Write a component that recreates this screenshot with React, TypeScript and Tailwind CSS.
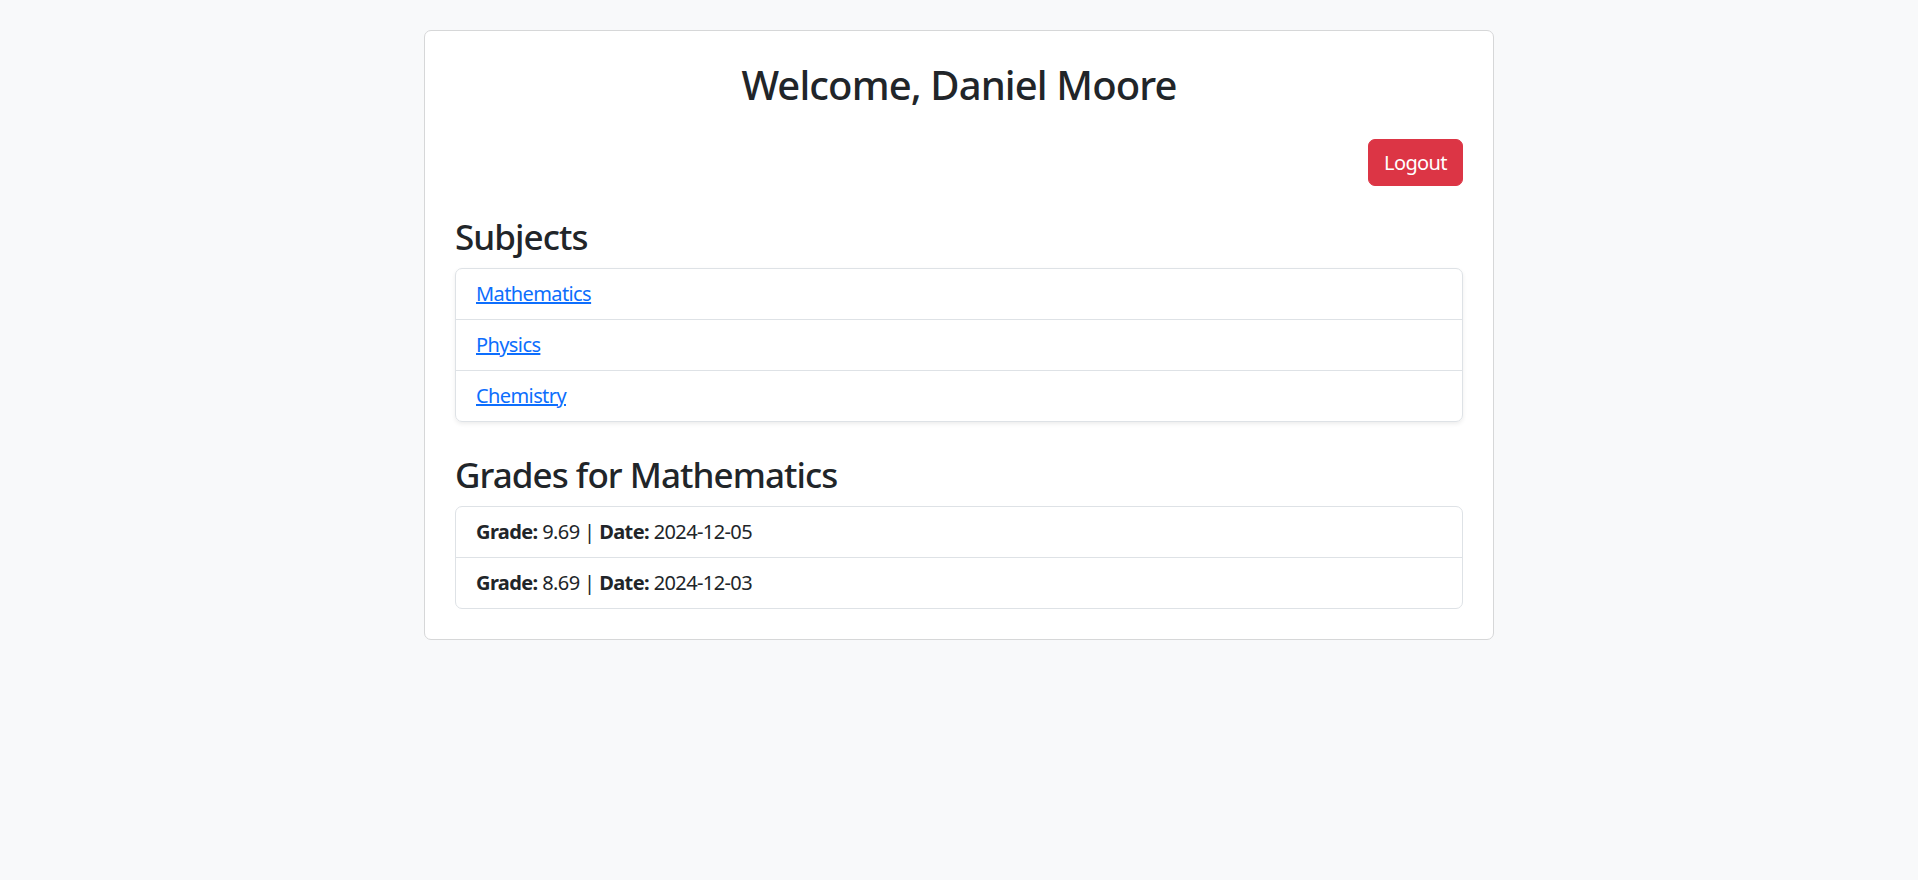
const subjects = ['Mathematics', 'Physics', 'Chemistry']

const grades = [
  { grade: '9.69', date: '2024-12-05' },
  { grade: '8.69', date: '2024-12-03' },
]

const App = () => (
  <div
    className="min-h-[880px] bg-[#f8f9fa] pt-[30px] text-[20px] leading-[30px] tracking-[-0.03em] text-[#212529]"
    style={{ fontFamily: '"Noto Sans", "Open Sans", sans-serif' }}
  >
    <div className="mx-auto w-[1070px] rounded-[7px] border border-[#d6d7d8] bg-white p-[30px]">
      <h2 className="mb-[30px] text-center text-[40px] font-medium leading-[48px] tracking-[-0.022em]">
        Welcome, Daniel Moore
      </h2>

      <div className="mb-[30px] flex justify-end">
        <button className="h-[47px] rounded-[7px] border border-[#dc3545] bg-[#dc3545] px-[15px] text-[20px] text-white">
          Logout
        </button>
      </div>

      <h3 className="mb-[10px] text-[35px] font-medium leading-[42px] tracking-[-0.027em]">
        Subjects
      </h3>
      <ul className="mb-[32px] overflow-hidden rounded-[7px] border border-[#dee2e6] shadow-[0_2px_4px_rgba(0,0,0,0.075)]">
        {subjects.map((s) => (
          <li
            className="border-b border-[#dee2e6] px-[20px] py-[10px] last:border-b-0"
            key={s}
          >
            <a className="text-[#0d6efd] underline" href="#">
              {s}
            </a>
          </li>
        ))}
      </ul>

      <h3 className="mb-[10px] text-[35px] font-medium leading-[42px] tracking-[-0.027em]">
        Grades for Mathematics
      </h3>
      <ul className="overflow-hidden rounded-[7px] border border-[#dee2e6]">
        {grades.map((g) => (
          <li
            className="border-b border-[#dee2e6] px-[20px] py-[10px] last:border-b-0"
            key={g.date}
          >
            <strong className="font-bold">Grade:</strong> {g.grade} |{' '}
            <strong className="font-bold">Date:</strong> {g.date}
          </li>
        ))}
      </ul>
    </div>
  </div>
)

export default App
